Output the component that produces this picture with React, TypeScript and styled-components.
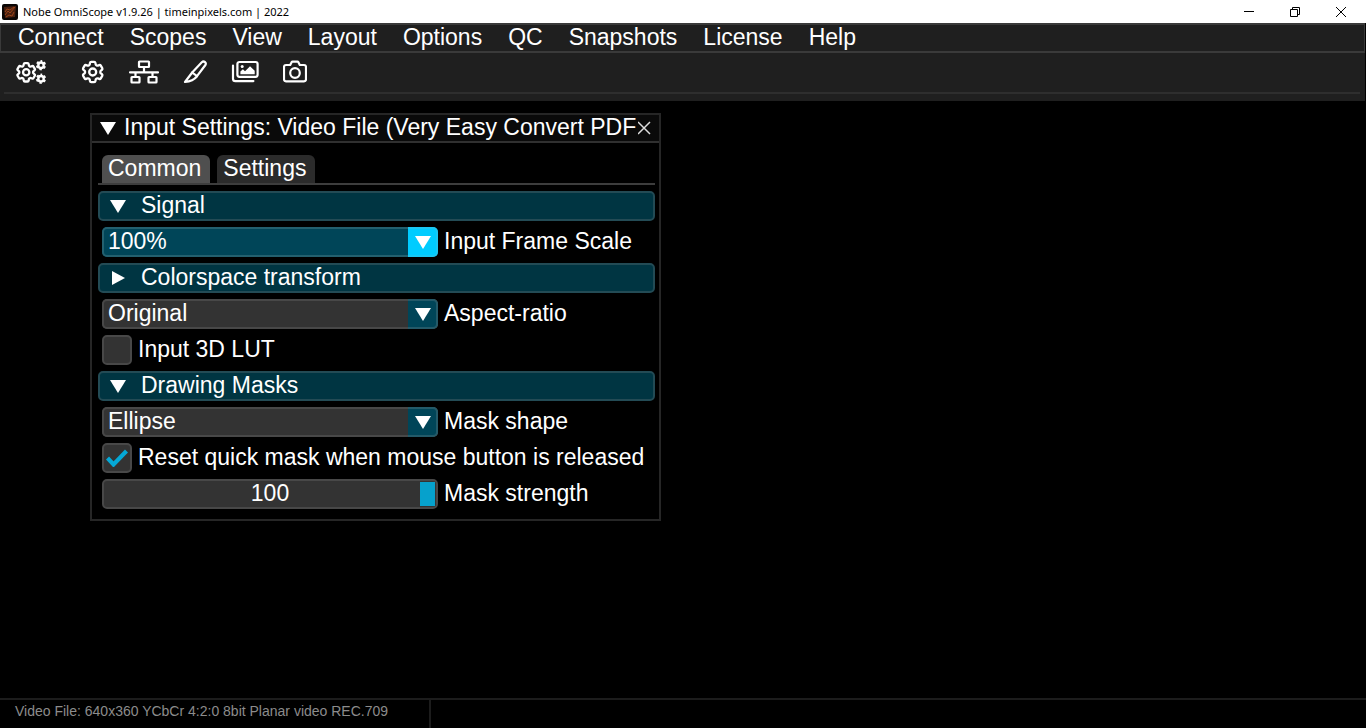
import React, { useState } from "react";
import styled, { createGlobalStyle, css } from "styled-components";

const GlobalStyle = createGlobalStyle`
  * { box-sizing: border-box; }
  body {
    margin: 0;
    background: #000;
    color: #fff;
    font-family: "Liberation Sans", Arial, Helvetica, sans-serif;
    font-size: 23px;
    line-height: 26px;
  }
  button, input, select {
    margin: 0;
    padding: 0;
    border: 0;
    background: none;
    color: inherit;
    font: inherit;
  }
  svg { display: block; flex: none; }
`;

const Screen = styled.div`
  display: flex;
  flex-direction: column;
  min-height: 100vh;
`;

const TitleBar = styled.header`
  display: flex;
  align-items: center;
  gap: 5px;
  height: 23px;
  padding: 0 2px;
  background: #fff;
  color: #000;
  font-family: "Noto Sans", "Open Sans", sans-serif;
  font-size: 11px;
  line-height: 16px;
`;

const AppTitle = styled.span`
  flex: 1;
  white-space: nowrap;
`;

const CaptionButtons = styled.div`
  display: flex;
`;

const CaptionButton = styled.button`
  display: grid;
  place-items: center;
  width: 46px;
  height: 21px;
`;

const Chrome = styled.div`
  height: 78px;
  margin-right: 1px;
  background: #1f1f1f;
`;

const MenuBar = styled.nav`
  display: flex;
  gap: 26px;
  height: 30px;
  padding-left: 17px;
  border: 1px solid #3a3a3a;
  border-top-width: 2px;
  border-bottom-width: 2px;
`;

const MenuButton = styled.button`
  height: 24px;
  line-height: 24px;
`;

const ToolBar = styled.div`
  display: flex;
  align-items: center;
  gap: 35px;
  height: 41px;
  margin: 0 5px 0 4px;
  padding: 0 12px 2px;
  border-bottom: 2px solid #2e2e2e;
`;

const ToolGroup = styled.div`
  display: flex;
  align-items: center;
  gap: 24px;
`;

const ToolButton = styled.button`
  display: block;
`;

const Workspace = styled.main`
  flex: 1;
  padding: 12px 90px;
`;

const Window = styled.section`
  width: 571px;
  max-width: 100%;
  border: 2px solid #262626;
`;

const WindowHeader = styled.div`
  display: flex;
  align-items: center;
  height: 28px;
  padding: 0 7px 0 8px;
  border-bottom: 2px solid #303030;
  background: #0a0a0a;
`;

const IconButton = styled.button`
  display: block;
  flex: none;
`;

const WindowTitle = styled.h1`
  flex: 1;
  height: 26px;
  margin: 0 0 2px 8px;
  overflow: hidden;
  font-size: 23px;
  font-weight: 400;
  line-height: 26px;
  white-space: nowrap;
`;

const Tabs = styled.div`
  display: flex;
  gap: 7px;
  margin: 12px 4px 6px 6px;
  padding-left: 4px;
  border-bottom: 2px solid #3d3d3d;
`;

const Tab = styled.button<{ $active: boolean }>`
  height: 28px;
  padding: 0 9px 2px 6px;
  border-radius: 6px 6px 0 0;
  background: ${(p) => (p.$active ? "#4f4f4f" : "#2b2b2b")};
`;

const Rows = styled.div`
  display: flex;
  flex-direction: column;
  gap: 6px;
  padding: 0 4px 10px 6px;
`;

const SectionHeader = styled.button`
  display: flex;
  align-items: center;
  gap: 15px;
  height: 30px;
  padding: 0 10px;
  border: 2px solid #234b55;
  border-radius: 5px;
  background: #003542;
  text-align: left;
`;

const RowText = styled.span`
  padding-bottom: 3px;
  white-space: nowrap;
`;

const FieldRow = styled.div`
  display: flex;
  align-items: center;
  gap: 6px;
  height: 30px;
  padding-left: 4px;
`;

const FieldLabel = styled.label`
  padding-bottom: 3px;
  white-space: nowrap;
`;

const stacked = css`
  display: grid;
  > * { grid-area: 1 / 1; }
`;

const Combo = styled.div`
  ${stacked}
  width: 336px;
  height: 30px;
`;

const ComboSelect = styled.select<{ $hot: boolean }>`
  appearance: none;
  width: 100%;
  height: 30px;
  padding: 0 34px 3px 6px;
  border-radius: 5px;
  background: ${(p) => (p.$hot ? "#004558" : "#333")};
  box-shadow: inset 0 0 0 2px ${(p) => (p.$hot ? "#23606f" : "#484848")};
  outline: none;
`;

const ComboArrow = styled.span<{ $hot: boolean }>`
  display: grid;
  place-items: center;
  justify-self: end;
  width: 30px;
  height: 30px;
  padding-left: 2px;
  border: 2px solid ${(p) => (p.$hot ? "#1ac8f4" : "#235a69")};
  border-left: 0;
  border-radius: 0 5px 5px 0;
  background: ${(p) => (p.$hot ? "#00ccff" : "#004558")};
  pointer-events: none;
`;

const CheckBox = styled.span`
  ${stacked}
  place-items: center;
  width: 30px;
  height: 30px;
  svg { pointer-events: none; }
`;

const CheckInput = styled.input`
  appearance: none;
  width: 30px;
  height: 30px;
  border: 2px solid #484848;
  border-radius: 5px;
  background: #333;
`;

const Slider = styled.div`
  ${stacked}
  width: 336px;
  height: 30px;
`;

const SliderInput = styled.input`
  appearance: none;
  width: 100%;
  height: 30px;
  padding: 0 1px;
  border: 2px solid #484848;
  border-radius: 5px;
  background: #333;
  &::-webkit-slider-thumb {
    appearance: none;
    width: 15px;
    height: 24px;
    background: #06a1cc;
  }
`;

const SliderValue = styled.output`
  align-self: center;
  padding-bottom: 3px;
  text-align: center;
  pointer-events: none;
`;

const StatusBar = styled.footer`
  display: flex;
  height: 30px;
  border-top: 2px solid #1c1c1c;
`;

const StatusCell = styled.div`
  width: 431px;
  padding: 1px 0 0 15px;
  border-right: 2px solid #1c1c1c;
  color: #8c8c8c;
  font-size: 14px;
  line-height: 20px;
  white-space: nowrap;
`;

const COG =
  "M9.594 3.94c.09-.542.56-.94 1.11-.94h2.593c.55 0 1.02.398 1.11.94l.213 1.281c.063.374.313.686.645.87.074.04.147.083.22.127.325.196.72.257 1.075.124l1.217-.456a1.125 1.125 0 0 1 1.37.49l1.296 2.247a1.125 1.125 0 0 1-.26 1.431l-1.003.827c-.293.241-.438.613-.43.992a7.723 7.723 0 0 1 0 .255c-.008.378.137.75.43.991l1.004.827c.424.35.534.955.26 1.43l-1.298 2.247a1.125 1.125 0 0 1-1.369.491l-1.217-.456c-.355-.133-.75-.072-1.076.124a6.47 6.47 0 0 1-.22.128c-.331.183-.581.495-.644.869l-.213 1.281c-.09.543-.56.94-1.11.94h-2.594c-.55 0-1.019-.398-1.11-.94l-.213-1.281c-.062-.374-.312-.686-.644-.87a6.52 6.52 0 0 1-.22-.127c-.325-.196-.72-.257-1.076-.124l-1.217.456a1.125 1.125 0 0 1-1.369-.49l-1.297-2.247a1.125 1.125 0 0 1 .26-1.431l1.004-.827c.292-.24.437-.613.43-.991a6.932 6.932 0 0 1 0-.255c.007-.38-.138-.751-.43-.992l-1.004-.827a1.125 1.125 0 0 1-.26-1.43l1.297-2.247a1.125 1.125 0 0 1 1.37-.491l1.216.456c.356.133.751.072 1.076-.124.072-.044.146-.086.22-.128.332-.183.582-.495.644-.869l.214-1.28Z";

const stroke = { fill: "none", stroke: "#fff", strokeWidth: 2.2, strokeLinejoin: "round", strokeLinecap: "round" } as const;

const Cog = ({ cx, cy, scale, width }: { cx: number; cy: number; scale: number; width: number }) => (
  <g transform={`translate(${cx} ${cy}) scale(${scale}) translate(-12 -12)`} {...stroke} strokeWidth={width / scale}>
    <path d={COG} />
    <circle cx="12" cy="12" r="3.1" />
  </g>
);

const SmallCog = ({ cx, cy }: { cx: number; cy: number }) => (
  <g transform={`translate(${cx} ${cy})`} fill="none" stroke="#fff">
    <circle r="2.7" strokeWidth="2.4" />
    <circle r="4.2" strokeWidth="1.8" strokeDasharray="2.4 2" strokeDashoffset="1.2" transform="rotate(-90)" />
  </g>
);

const GearsIcon = () => (
  <svg width="30" height="24" viewBox="0 0 30 24">
    <Cog cx={10.2} cy={12.3} scale={1.02} width={2.3} />
    <SmallCog cx={25} cy={5.2} />
    <SmallCog cx={25} cy={18.7} />
  </svg>
);

const GearIcon = () => (
  <svg width="24" height="24" viewBox="0 0 24 24">
    <Cog cx={11.7} cy={12} scale={1.13} width={2.3} />
  </svg>
);

const SitemapIcon = () => (
  <svg width="30" height="24" viewBox="0 0 30 24" {...stroke}>
    <rect x="10" y="1.5" width="10" height="5.5" rx="0.5" />
    <path d="M15 7v5M1 12.3h28M6.5 12.3v4.5M23.5 12.3v4.5" />
    <rect x="2.500" y="17" width="8" height="5.5" rx="0.5" />
    <rect x="19.500" y="17" width="8" height="5.5" rx="0.5" />
  </svg>
);

const ScalpelIcon = () => (
  <svg width="24" height="24" viewBox="0 0 24 24" {...stroke}>
    <path d="M9.200 12.500 18.800 2.300c2-1.900 5 .2 3.600 2.700L14 16.200" />
    <path d="M9.200 12.500 2 22c4.600-.4 9.200-2.200 12-5.800L9.200 12.500Z" />
  </svg>
);

const ImagesIcon = () => (
  <svg width="28" height="24" viewBox="0 0 28 24" {...stroke}>
    <rect x="6.4" y="2" width="20.2" height="14.8" rx="2" />
    <path d="M2 5.500v13.200c0 1.600.9 2.400 2.400 2.400h18" />
    <path d="M9.400 14.200v-2.600l2.500-2.300 2.100 1.900 5-5 4.700 4.600v3.400Z" fill="#fff" stroke="none" />
    <circle cx="11.2" cy="6.4" r="1.5" fill="#fff" stroke="none" />
  </svg>
);

const CameraIcon = () => (
  <svg width="24" height="24" viewBox="0 0 24 24" {...stroke}>
    <path d="M3 5h4.200l1.300-2.600c.3-.5.6-.7 1.100-.7h4.800c.5 0 .8.2 1.100.7L16.800 5H21c1.200 0 2 .8 2 2v12.300c0 1.200-.8 2-2 2H3c-1.200 0-2-.8-2-2V7c0-1.200.8-2 2-2Z" />
    <circle cx="12" cy="13" r="4.8" />
  </svg>
);

const AppIcon = () => (
  <svg width="16" height="16" viewBox="0 0 16 16">
    <rect width="16" height="16" rx="2" fill="#0b0605" />
    <path d="m2 3 12-1-1 11-10 1Z" fill="#4a1f0e" />
    <path d="m3 11 3-4 2 2 5-6M3 8l2-3 3 1 4-3M4 13l3-2 3 1 2-4" fill="none" stroke="#9a4419" />
  </svg>
);

const Triangle = ({ right = false }: { right?: boolean }) => (
  <svg width="16" height="16" viewBox="0 0 16 16">
    <path d={right ? "M2 1v14l13-7Z" : "M0 2h16L8 15Z"} fill="#fff" />
  </svg>
);

const TOOLS: [string, () => React.JSX.Element][] = [
  ["Input settings", GearIcon],
  ["Routing", SitemapIcon],
  ["Mask", ScalpelIcon],
  ["Gallery", ImagesIcon],
  ["Snapshot", CameraIcon],
];

const MENUS = ["Connect", "Scopes", "View", "Layout", "Options", "QC", "Snapshots", "License", "Help"];

const ComboField = ({ id, label, options, hot = false }: { id: string; label: string; options: string[]; hot?: boolean }) => (
  <FieldRow>
    <Combo>
      <ComboSelect id={id} $hot={hot}>
        {options.map((o) => (
          <option key={o}>{o}</option>
        ))}
      </ComboSelect>
      <ComboArrow $hot={hot}>
        <Triangle />
      </ComboArrow>
    </Combo>
    <FieldLabel htmlFor={id}>{label}</FieldLabel>
  </FieldRow>
);

const CheckField = ({ id, label, initial = false }: { id: string; label: string; initial?: boolean }) => {
  const [checked, setChecked] = useState(initial);
  return (
    <FieldRow>
      <CheckBox>
        <CheckInput id={id} type="checkbox" checked={checked} onChange={(e) => setChecked(e.target.checked)} />
        {checked && (
          <svg width="22" height="18" viewBox="0 0 22 18">
            <path d="m1.500 9 6 6.500L20.500 2" fill="none" stroke="#05a8d6" strokeWidth="4.200" />
          </svg>
        )}
      </CheckBox>
      <FieldLabel htmlFor={id}>{label}</FieldLabel>
    </FieldRow>
  );
};

export default function App() {
  const [tab, setTab] = useState("Common");
  const [strength, setStrength] = useState(100);
  return (
    <Screen>
      <GlobalStyle />
      <TitleBar>
        <AppIcon />
        <AppTitle>Nobe OmniScope v1.9.26 | timeinpixels.com | 2022</AppTitle>
        <CaptionButtons>
          <CaptionButton aria-label="Minimize">
            <svg width="10" height="10" viewBox="0 0 10 10"><path d="M0 4.500h10" stroke="#000" /></svg>
          </CaptionButton>
          <CaptionButton aria-label="Restore">
            <svg width="10" height="10" viewBox="0 0 10 10"><path d="M.5 2.500h7v7h-7zM2.500 2.500v-2h7v7h-2" fill="none" stroke="#000" /></svg>
          </CaptionButton>
          <CaptionButton aria-label="Close">
            <svg width="10" height="10" viewBox="0 0 10 10"><path d="m0 0 10 10M10 0 0 10" stroke="#000" /></svg>
          </CaptionButton>
        </CaptionButtons>
      </TitleBar>
      <Chrome>
        <MenuBar>
          {MENUS.map((m) => (
            <MenuButton key={m}>{m}</MenuButton>
          ))}
        </MenuBar>
        <ToolBar>
          <ToolButton aria-label="Preferences"><GearsIcon /></ToolButton>
          <ToolGroup>
            {TOOLS.map(([name, Icon]) => (
              <ToolButton key={name} aria-label={name}><Icon /></ToolButton>
            ))}
          </ToolGroup>
        </ToolBar>
      </Chrome>
      <Workspace>
        <Window>
          <WindowHeader>
            <IconButton aria-label="Collapse"><Triangle /></IconButton>
            <WindowTitle>Input Settings: Video File (Very Easy Convert PDF</WindowTitle>
            <IconButton aria-label="Close window">
              <svg width="14" height="14" viewBox="0 0 14 14"><path d="m0 1 12 12M12 1 0 13" stroke="#ddd" strokeWidth="1.500" /></svg>
            </IconButton>
          </WindowHeader>
          <Tabs role="tablist">
            {["Common", "Settings"].map((t) => (
              <Tab key={t} role="tab" aria-selected={tab === t} $active={tab === t} onClick={() => setTab(t)}>{t}</Tab>
            ))}
          </Tabs>
          <Rows>
            <SectionHeader aria-expanded="true"><Triangle /><RowText>Signal</RowText></SectionHeader>
            <ComboField id="scale" label="Input Frame Scale" options={["100%", "50%", "25%"]} hot />
            <SectionHeader aria-expanded="false"><Triangle right /><RowText>Colorspace transform</RowText></SectionHeader>
            <ComboField id="aspect" label="Aspect-ratio" options={["Original", "16:9", "4:3"]} />
            <CheckField id="lut" label="Input 3D LUT" />
            <SectionHeader aria-expanded="true"><Triangle /><RowText>Drawing Masks</RowText></SectionHeader>
            <ComboField id="shape" label="Mask shape" options={["Ellipse", "Rectangle"]} />
            <CheckField id="reset" label="Reset quick mask when mouse button is released" initial />
            <FieldRow>
              <Slider>
                <SliderInput id="strength" type="range" min={0} max={100} value={strength} onChange={(e) => setStrength(Number(e.target.value))} />
                <SliderValue htmlFor="strength">{strength}</SliderValue>
              </Slider>
              <FieldLabel htmlFor="strength">Mask strength</FieldLabel>
            </FieldRow>
          </Rows>
        </Window>
      </Workspace>
      <StatusBar>
        <StatusCell>Video File: 640x360 YCbCr 4:2:0 8bit Planar video REC.709</StatusCell>
      </StatusBar>
    </Screen>
  );
}
